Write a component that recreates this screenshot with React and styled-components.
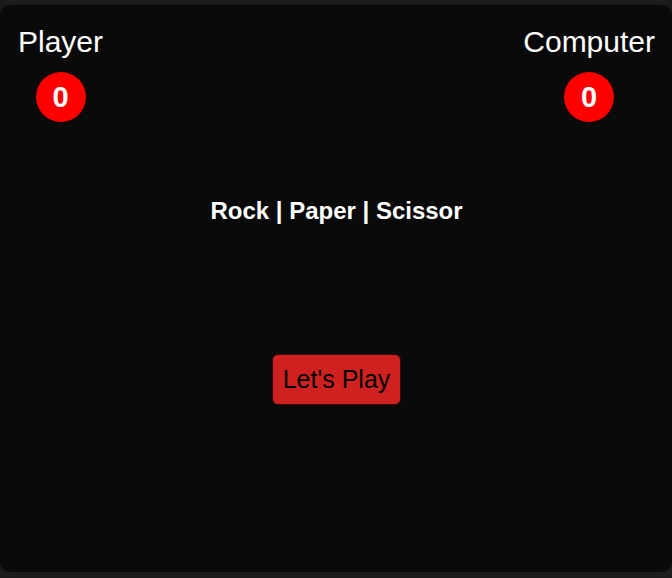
import React from "react";
import styled, { createGlobalStyle } from "styled-components";

const GlobalStyle = createGlobalStyle`
  body {
    margin: 0;
    background: #1c1c1c;
    font-family: "Liberation Sans", Arial, sans-serif;
  }
`;

const Card = styled.div`
  margin-top: 5px;
  height: 567px;
  box-sizing: border-box;
  background: #0a0a0a;
  border-radius: 10px;
  padding: 20px 17px 0 18px;
  display: flex;
  flex-direction: column;
  color: #fff;
`;

const ScoreBar = styled.div`
  display: flex;
  justify-content: space-between;
`;

const Side = styled.div`
  display: flex;
  flex-direction: column;
  align-items: center;
`;

const Name = styled.div`
  font-size: 30px;
  line-height: 34px;
`;

const Score = styled.div`
  margin-top: 13px;
  width: 50px;
  height: 50px;
  border-radius: 50%;
  background: #ff0000;
  display: flex;
  align-items: center;
  justify-content: center;
  font-size: 29px;
  font-weight: 700;
`;

const Title = styled.h3`
  margin: 75px 0 0;
  text-align: center;
  font-size: 24px;
  line-height: 28px;
  font-weight: 700;
`;

const PlayButton = styled.button`
  align-self: center;
  margin-top: 129px;
  height: 51px;
  padding: 0 10px;
  background: #d02121;
  color: #000;
  border: 1px solid #3a0a0a;
  border-radius: 6px;
  font-family: inherit;
  font-size: 25px;
  cursor: pointer;
`;

const App = () => {
  return (
    <>
      <GlobalStyle />
      <Card>
        <ScoreBar>
          <Side>
            <Name>Player</Name>
            <Score>0</Score>
          </Side>
          <Side>
            <Name>Computer</Name>
            <Score>0</Score>
          </Side>
        </ScoreBar>
        <Title>Rock | Paper | Scissor</Title>
        <PlayButton>Let's Play</PlayButton>
      </Card>
    </>
  );
};

export default App;
